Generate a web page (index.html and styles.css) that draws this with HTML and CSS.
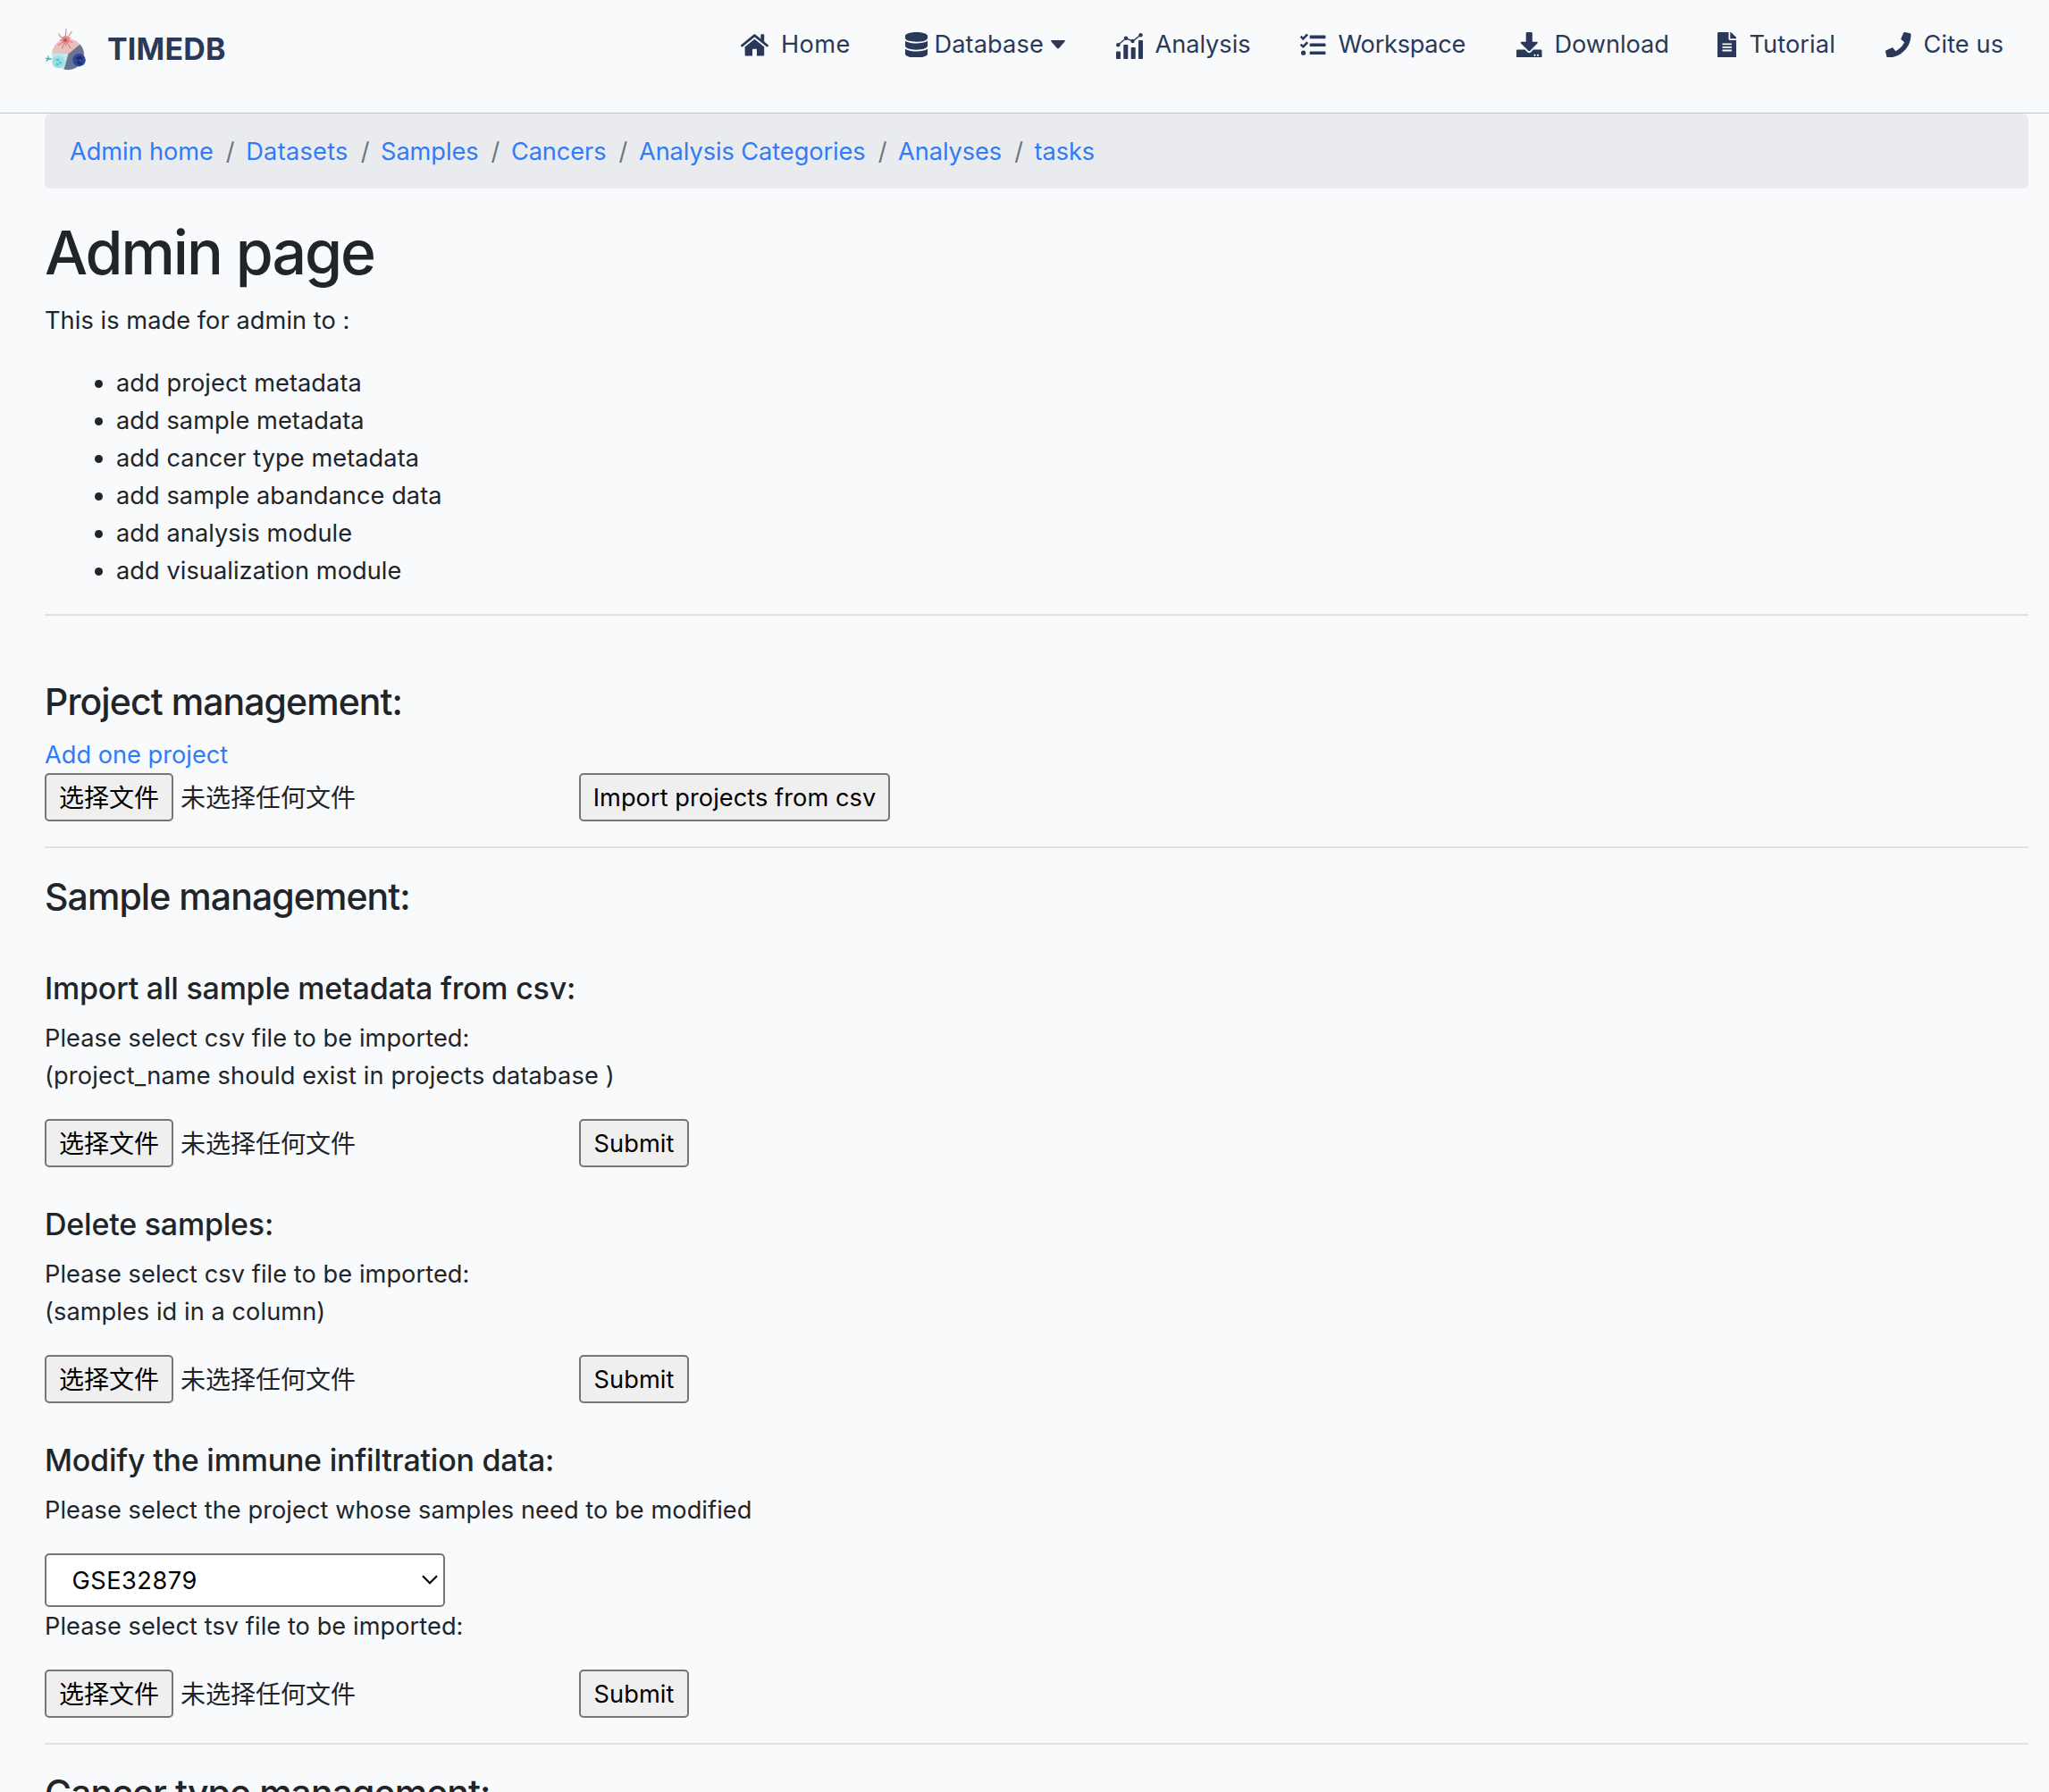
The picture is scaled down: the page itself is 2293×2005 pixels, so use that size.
FILE: index.html
```html
<!DOCTYPE html>
<html lang="zh-CN">
<head>
<meta charset="utf-8">
<title>TIMEDB</title>
<link rel="stylesheet" href="styles.css">
</head>
<body>
<header class="navbar">
  <a class="brand" href="#">
    <svg class="brand-logo" viewBox="50 31 48 48" aria-hidden="true">
      <path fill="#e9bfbf" d="M58 60A18 18 0 0 1 89.500 49.500L76.500 60.300Z"/>
      <path fill="#c3e8ea" d="M58 59.500L76.500 60.300L71.500 77.600A18 18 0 0 1 58 59.500Z"/>
      <path fill="#6b7393" d="M89.500 49.500A18 18 0 0 1 94 60C94 71 84 80.500 71.500 77.600L76.500 60.300Z"/>
      <g fill="none" stroke="#dc7f7d" stroke-width="1.100" stroke-linecap="round">
        <path d="M73 45L74 32.500M74.500 43L78.500 38L80 35.500M71 43L67.500 41L66 38M72 46L65 50.500M72.500 46L69.500 54M74 46L78.500 53.500M75 45L81 47.500M73 46L73.500 51M75 43L79 42M71 44L67 45"/>
      </g>
      <circle cx="73.200" cy="44.800" r="4.600" fill="#e08a88"/>
      <circle cx="73" cy="45" r="2" fill="#c55255"/>
      <circle cx="65.300" cy="69.300" r="7" fill="#98dfe6"/>
      <path fill="#4eb6cb" d="M62.500 66.500l3-1 1 1.500-2.500 1.500zM66.500 68.500l2 .5-.5 2.500-2.500-1zM63 70.500l3 1.500-1 1.500-2.500-1z"/>
      <path fill="none" stroke="#4bb2c5" stroke-width="1.300" d="M51 65.500h3.500M51.500 68.500l3.500-2.500h3M53.500 62.500l1.500 3"/>
      <circle cx="88.500" cy="67.200" r="7.300" fill="#31489a"/>
      <path fill="#1d2c66" d="M85 64.500l4-2 3.500 2-1 3-2-2-2.500 2zM85.500 69l3-1 1.500 2.500 2-1.500-.5 3-4 .5z"/>
    </svg>
    <span class="brand-name">TIMEDB</span>
  </a>
  <nav class="nav">
    <a class="nav-link" href="#">
      <svg class="icon" width="31" height="25" viewBox="0 0 31 25"><path fill="none" stroke="currentColor" stroke-width="2.800" stroke-linecap="round" stroke-linejoin="round" d="M1.500 13L15.400 1.600L29.500 13"/><path fill="currentColor" d="M22.300 1.200q0-1 1-1h1.900q1 0 1 1v9l-3.900-3zM15.400 5.800L26.200 14.600V23.500q0 1-1 1H17.900V17.500q0-.8-.8-.8H13.800q-.8 0-.8.8V24.500H5.600q-1 0-1-1V14.600z"/></svg>
      <span class="label label-home">Home</span>
    </a>
    <a class="nav-link nav-link-tight" href="#">
      <svg class="icon" width="25" height="28.600" viewBox="0 0 448 512"><path fill="currentColor" d="M448 73.143v45.714C448 159.143 347.667 192 224 192S0 159.143 0 118.857V73.143C0 32.857 100.333 0 224 0s224 32.857 224 73.143zM448 176v102.857C448 319.143 347.667 352 224 352S0 319.143 0 278.857V176c48.125 33.143 136.208 48.572 224 48.572S399.874 209.143 448 176zm0 160v102.857C448 479.143 347.667 512 224 512S0 479.143 0 438.857V336c48.125 33.143 136.208 48.572 224 48.572S399.874 369.143 448 336z"/></svg>
      <span class="label">Database</span>
      <svg class="caret" width="16" height="10" viewBox="0 0 16 10"><path fill="currentColor" d="M1 0H15Q16.400.3 15.600 1.500L9 9Q8 9.800 7 9L.4 1.500Q-.4.3 1 0Z"/></svg>
    </a>
    <a class="nav-link" href="#">
      <svg class="icon icon-chart" width="30" height="29" viewBox="0 0 30 29"><g fill="currentColor"><rect x="0" y="20.500" width="5" height="8.500" rx=".8"/><rect x="8.300" y="13" width="5" height="16" rx=".8"/><rect x="16.700" y="16" width="5" height="13" rx=".8"/><rect x="25" y="8" width="5" height="21" rx=".8"/><circle cx="2.300" cy="13.300" r="2.200"/><circle cx="11" cy="5.800" r="2.200"/><circle cx="18.500" cy="9" r="2.200"/><circle cx="27.500" cy="2.200" r="2.200"/></g><path fill="none" stroke="currentColor" stroke-width="1.400" d="M2.300 13.300L11 5.800L18.500 9L27.500 2.200"/></svg>
      <span class="label label-plain">Analysis</span>
    </a>
    <a class="nav-link" href="#">
      <svg class="icon" width="28.500" height="28.500" viewBox="0 0 512 512"><path fill="currentColor" d="M139.610 35.500a12 12 0 0 0-17 0L58.930 98.810l-22.700-22.120a12 12 0 0 0-17 0L3.530 92.410a12 12 0 0 0 0 17l47.590 47.400a12.780 12.780 0 0 0 17.610 0l15.590-15.620L156.520 69a12.090 12.090 0 0 0 .09-17zm0 159.190a12 12 0 0 0-17 0l-63.680 63.720-22.700-22.100a12 12 0 0 0-17 0L3.530 252a12 12 0 0 0 0 17L51 316.500a12.770 12.770 0 0 0 17.600 0l15.700-15.690 72.200-72.220a12 12 0 0 0 .09-16.900zM64 368c-26.490 0-48.590 21.500-48.590 48S37.530 464 64 464a48 48 0 0 0 0-96zm432 16H208a16 16 0 0 0-16 16v32a16 16 0 0 0 16 16h288a16 16 0 0 0 16-16v-32a16 16 0 0 0-16-16zm0-320H208a16 16 0 0 0-16 16v32a16 16 0 0 0 16 16h288a16 16 0 0 0 16-16V80a16 16 0 0 0-16-16zm0 160H208a16 16 0 0 0-16 16v32a16 16 0 0 0 16 16h288a16 16 0 0 0 16-16v-32a16 16 0 0 0-16-16z"/></svg>
      <span class="label label-workspace">Workspace</span>
    </a>
    <a class="nav-link" href="#">
      <svg class="icon" width="28.500" height="28.500" viewBox="0 0 512 512"><path fill="currentColor" d="M216 0h80c13.300 0 24 10.700 24 24v168h87.700c17.800 0 26.700 21.500 14.100 34.100L269.700 378.300c-7.500 7.500-19.800 7.500-27.300 0L90.100 226.100c-12.600-12.600-3.700-34.100 14.100-34.100H192V24c0-13.300 10.700-24 24-24zm296 376v112c0 13.300-10.700 24-24 24H24c-13.300 0-24-10.700-24-24V376c0-13.300 10.700-24 24-24h146.700l49 49c20.100 20.100 52.500 20.100 72.600 0l49-49H488c13.300 0 24 10.700 24 24zm-124 88c0-11-9-20-20-20s-20 9-20 20 9 20 20 20 20-9 20-20zm64 0c0-11-9-20-20-20s-20 9-20 20 9 20 20 20 20-9 20-20z"/></svg>
      <span class="label label-plain">Download</span>
    </a>
    <a class="nav-link" href="#">
      <svg class="icon" width="21.400" height="28.500" viewBox="0 0 384 512"><path fill="currentColor" d="M224 136V0H24C10.700 0 0 10.700 0 24v464c0 13.300 10.700 24 24 24h336c13.300 0 24-10.700 24-24V160H248c-13.200 0-24-10.800-24-24zm64 236c0 6.600-5.400 12-12 12H108c-6.600 0-12-5.400-12-12v-8c0-6.600 5.400-12 12-12h168c6.600 0 12 5.400 12 12v8zm0-64c0 6.600-5.400 12-12 12H108c-6.600 0-12-5.400-12-12v-8c0-6.600 5.400-12 12-12h168c6.600 0 12 5.400 12 12v8zm0-72v8c0 6.600-5.400 12-12 12H108c-6.600 0-12-5.400-12-12v-8c0-6.600 5.400-12 12-12h168c6.600 0 12 5.400 12 12zm96-114.100v6.100H256V0h6.100c6.400 0 12.500 2.500 17 7l97.900 98c4.500 4.500 7 10.600 7 16.900z"/></svg>
      <span class="label">Tutorial</span>
    </a>
    <a class="nav-link" href="#">
      <svg class="icon" width="28.500" height="28.500" viewBox="0 0 512 512"><path fill="currentColor" d="M493.400 24.600l-104-24c-11.300-2.600-22.900 3.300-27.500 13.900l-48 112c-4.200 9.800-1.400 21.300 6.900 28l60.600 49.600c-36 76.700-98.900 140.500-177.200 177.200l-49.600-60.600c-6.800-8.300-18.200-11.100-28-6.900l-112 48C3.900 366.500-2 378.100.6 389.400l24 104C27.100 504.200 36.700 512 48 512c256.100 0 464-207.500 464-464 0-11.200-7.700-20.900-18.600-23.400z"/></svg>
      <span class="label">Cite us</span>
    </a>
  </nav>
</header>

<main class="container">
  <ol class="breadcrumb">
    <li><a href="#">Admin home</a></li>
    <li><a class="loose" href="#">Datasets</a></li>
    <li><a href="#">Samples</a></li>
    <li><a href="#">Cancers</a></li>
    <li><a href="#">Analysis Categories</a></li>
    <li><a href="#">Analyses</a></li>
    <li><a href="#">tasks</a></li>
  </ol>

  <h1>Admin page</h1>
  <p>This is made for admin to :</p>
  <ul class="features">
    <li>add project metadata</li>
    <li>add sample metadata</li>
    <li>add cancer type metadata</li>
    <li>add sample abandance data</li>
    <li>add analysis module</li>
    <li>add visualization module</li>
  </ul>
  <hr>

  <section class="project">
    <h4>Project management:</h4>
    <a class="add-link" href="#">Add one project</a>
    <form class="upload">
      <div class="file"><button type="button">选择文件</button><span>未选择任何文件</span></div>
      <button class="import" type="button">Import projects from csv</button>
    </form>
  </section>
  <hr>

  <section class="samples">
    <h4>Sample management:</h4>
    <section class="task">
      <h5>Import all sample metadata from csv:</h5>
      <p>Please select csv file to be imported:<br><span class="note">(project_name should exist in projects database )</span></p>
      <form class="upload">
        <div class="file"><button type="button">选择文件</button><span>未选择任何文件</span></div>
        <button class="submit" type="button">Submit</button>
      </form>
    </section>
    <section class="task">
      <h5>Delete samples:</h5>
      <p>Please select csv file to be imported:<br>(samples id in a column)</p>
      <form class="upload">
        <div class="file"><button type="button">选择文件</button><span>未选择任何文件</span></div>
        <button class="submit" type="button">Submit</button>
      </form>
    </section>
    <section class="task">
      <h5>Modify the immune infiltration data:</h5>
      <p>Please select the project whose samples need to be modified</p>
      <div class="select">
        <select><option>GSE32879</option></select>
        <svg class="chevron" width="18" height="11" viewBox="0 0 18 11"><path fill="none" stroke="#000" stroke-width="2.200" d="M1 1.200L9 9.200L17 1.200"/></svg>
      </div>
      <p>Please select tsv file to be imported:</p>
      <form class="upload">
        <div class="file"><button type="button">选择文件</button><span>未选择任何文件</span></div>
        <button class="submit" type="button">Submit</button>
      </form>
    </section>
  </section>
  <hr>

  <h4>Cancer type management:</h4>
</main>
</body>
</html>
```
FILE: styles.css
```css
* { box-sizing: border-box; }

html { height: 100%; overflow: hidden; }

body {
  margin: 0;
  height: 100%;
  overflow: hidden;
  background: #f8fafc;
  color: #212529;
  font: 400 27.2px/42px Inter, "Noto Sans CJK SC", sans-serif;
  letter-spacing: 0.060px;
}

a { color: #2f7cf8; text-decoration: none; }

/* Navigation bar */
.navbar {
  display: flex;
  justify-content: space-between;
  height: 127px;
  padding: 29px 43px 0 50px;
  border-bottom: 1px solid #bbc6d0;
}

.brand { display: flex; gap: 22px; height: 50px; color: #2a3959; }
.brand-logo { width: 48px; height: 48px; margin-top: 2px; }
.brand-name { padding-top: 1px; font-size: 34px; font-weight: 700; line-height: 50px; letter-spacing: 0.170px; }

.nav {
  display: grid;
  grid-template-columns: 184px 235.500px 206.500px 242px 225px 188px 140px;
  height: 42px;
}
.nav-link { display: flex; align-items: center; gap: 14px; height: 42px; color: #2a3959; white-space: nowrap; }
.nav-link-tight { gap: 7.500px; }
.icon { display: block; flex: none; }
.icon-chart { margin-top: 2px; }
.caret { flex: none; margin-left: 1px; }
.label { letter-spacing: 0.1px; padding-top: 0.800px; }
.label-home { letter-spacing: 0.4px; }
.label-plain { letter-spacing: -0.050px; }
.label-workspace { letter-spacing: -0.290px; }

/* Page body */
.container { padding: 0 23px 0 50px; }

.breadcrumb {
  display: flex;
  height: 84px;
  margin: 0 0 28px;
  padding: 22px 28px 20px;
  list-style: none;
  background: #eaebef;
  border-radius: 7px;
}
.breadcrumb li { display: flex; letter-spacing: -0.070px; }
.breadcrumb .loose { letter-spacing: 0.250px; }
.breadcrumb li + li::before { content: "/"; width: 8.400px; margin: 0 14px; color: #6c757d; }

/* Text blocks sit 1px low in their line, taken back from the bottom margin */
h1, h4, h5 { margin: 0 0 13px; padding-top: 1px; font-weight: 500; }
h1 { font-size: 68px; line-height: 84px; letter-spacing: -2.080px; }
h4 { font-size: 41px; line-height: 50.400px; letter-spacing: -0.930px; }
h5 { font-size: 34px; line-height: 42px; letter-spacing: -0.220px; }
p { margin: 0 0 27px; padding-top: 1px; }
.note { letter-spacing: 0.150px; }

.features { margin: 0 0 -1px; padding: 1px 0 0 80px; }

hr { height: 2px; margin: 28px 0; border: 0; background: #dfe1e3; }

.project { padding-top: 42px; }
.add-link { display: block; height: 42px; padding-top: 1px; letter-spacing: 0; }
.task { padding-top: 42px; }

/* Form controls */
.upload { display: flex; height: 54px; }
.file { display: flex; align-items: center; gap: 8px; width: 598px; font-size: 28px; letter-spacing: 0; }
.file span { padding-top: 2px; }

button {
  height: 54px;
  padding: 2px 14px 0;
  font: inherit;
  letter-spacing: 0.050px;
  color: #000;
  background: #efefef;
  border: 2px solid #767676;
  border-radius: 5px;
}
.file button { letter-spacing: 0; }
.import { width: 348px; padding: 2px 0 0; }
.submit { width: 123px; padding: 2px 0 0; }

.select { display: grid; width: 448px; height: 60px; margin-top: -0.200px; }
.select > * { grid-area: 1 / 1; }
select {
  appearance: none;
  width: 448px;
  height: 60px;
  padding: 2px 28.500px 0;
  font: inherit;
  letter-spacing: 0.500px;
  color: #000;
  background: #fff;
  border: 2px solid #767676;
  border-radius: 5px;
}
.chevron { place-self: center end; margin-right: 8px; pointer-events: none; }
```
